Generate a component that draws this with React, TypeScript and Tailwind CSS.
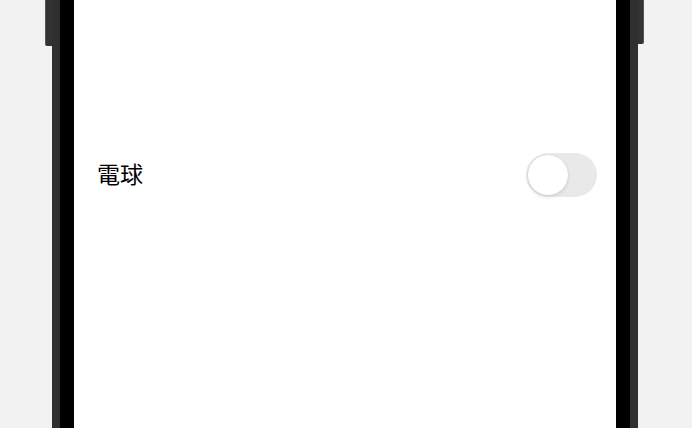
export default function App() {
  return (
    <div className="h-[428px] w-full overflow-hidden bg-[#f2f2f2] flex pl-[52px]">
      <div className="relative h-full w-[586px] border-x-[8px] border-[#2f2f2f] bg-black px-[14px]">
        {/* side buttons */}
        <div className="absolute left-[-15px] top-0 h-[46px] w-[7px] rounded-bl-[2px] border-l border-[#555] bg-[#333]"></div>
        <div className="absolute right-[-14px] top-0 h-[44px] w-[6px] rounded-br-[2px] border-r border-[#555] bg-[#333]"></div>

        <div className="h-full w-full bg-white">
          <div className="flex items-center justify-between pl-[23px] pr-[19px] pt-[153px]">
            <span className="mb-[3px] text-[23px] leading-none text-black" style={{ fontFamily: '"Noto Sans CJK JP", "Noto Sans", sans-serif' }}>
              電球
            </span>
            <button className="flex h-[44px] w-[71px] items-center rounded-full bg-[#e9e9ea] p-[2px]">
              <span className="block h-[40px] w-[40px] rounded-full bg-white shadow-[0_2px_4px_rgba(0,0,0,0.1),0_0_1px_rgba(0,0,0,0.15)]"></span>
            </button>
          </div>
        </div>
      </div>
    </div>
  );
}
